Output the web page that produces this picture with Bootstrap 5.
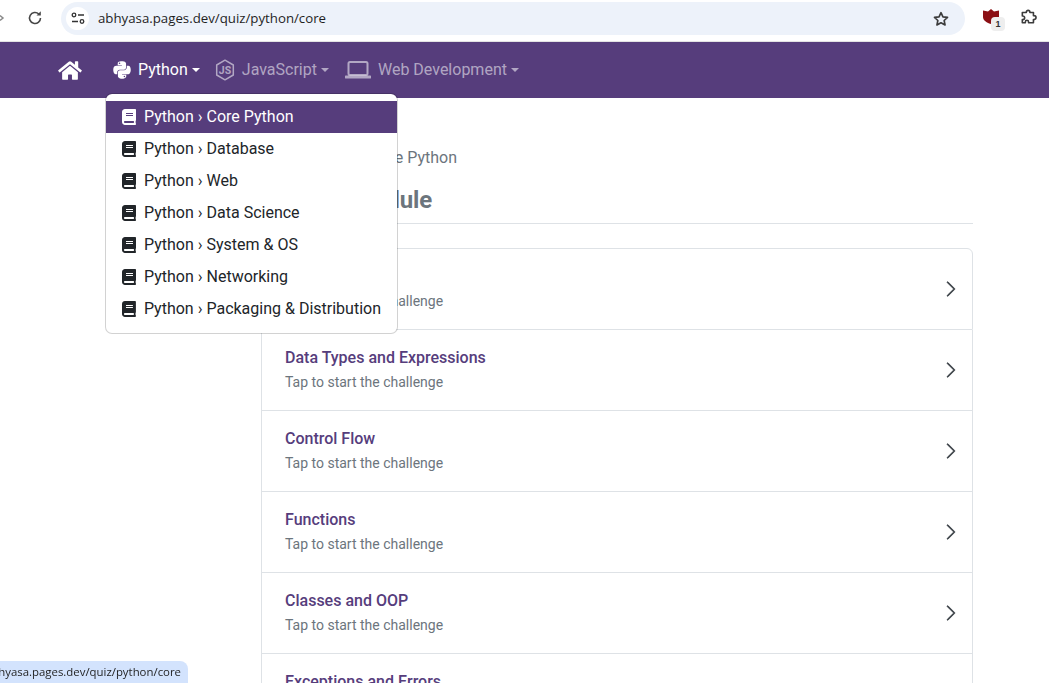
<!DOCTYPE html>
<html lang="en">
<head>
<meta charset="utf-8">
<title>Core Python</title>
<link href="https://cdn.jsdelivr.net/npm/bootstrap@5.3.0/dist/css/bootstrap.min.css" rel="stylesheet">
<style>
html,body{height:683px;overflow:hidden}
body{font-family:Roboto,"Liberation Sans",sans-serif;background:#fff;color:#212529}
.chrome-bar{height:42px;border-bottom:1px solid #e3e3e3;background:#fff}
.chrome-back{width:61px;height:35px;padding-right:18px}
.chrome-pill{margin-top:2px;width:904px;height:33px;background:#edf2fa;border-radius:17px;padding-left:5px;padding-right:15px}
.chrome-tune{width:23px;height:23px;border-radius:50%;background:#fff}
.chrome-url{font-family:"Open Sans","Noto Sans",sans-serif;font-size:13.25px;color:#1f1f1f;margin-left:9px}
.chrome-tools{height:32px;margin-top:2px;padding-left:18px;gap:21px}
.ext-wrap{position:relative;width:16px;height:22px;padding-top:7px}
.ext-badge{position:absolute;left:8px;top:15px;width:14px;height:14px;border-radius:4px;background:#eee;font:700 9px "Liberation Sans",sans-serif;color:#333;text-align:center;line-height:14px}
.ext-puzzle{margin-top:7px}
.topnav{background:#563d7c;height:56px;padding:0 0 0 58px}
.topnav .navbar-brand{margin:0 23px 0 0;padding:0;line-height:0}
.topnav .nav-link{font-size:16px;padding:8px;color:rgba(255,255,255,.55);display:flex;align-items:center}
.topnav .nav-item:first-child .nav-link{padding-right:7px}
.topnav .nav-link.active{color:#fff}
.topnav .nav-link svg{margin-right:7px}
.topnav .dropdown-toggle::after{margin-left:4px}
.py-menu{position:absolute;left:105px;top:93px;margin:0;width:293px;padding:7px 0 7.5px;border-radius:7px;z-index:10;display:block}
.py-menu .dropdown-item{height:32px;padding:4px 16px;display:flex;align-items:center;gap:8px;font-size:16px;color:#212529}
.py-menu .dropdown-item.active{background:#563d7c;color:#fff}
.quiz-main{margin-left:261px;width:712px;padding-top:48px}
.crumb-line{font-size:16px;color:#6c757d;line-height:24px;margin-bottom:16px;padding-left:2px}
.quiz-title{font-size:24px;font-weight:700;letter-spacing:-.15px;color:#6c757d;margin:0;line-height:29px;padding-bottom:8px;border-bottom:1px solid #dee2e6;margin-bottom:24px}
.quiz-list .list-group-item{height:81px;padding:0 12px 0 23px;display:flex;justify-content:space-between;align-items:center}
.quiz-list .list-group-item:first-child{height:82px}
.quiz-text{margin-bottom:2px}
.quiz-name{font-size:16px;font-weight:500;color:#563d7c;line-height:24px;margin-bottom:2px}
.quiz-sub{font-size:14px;color:#6c757d;line-height:21px}
.status-pop{position:fixed;left:0;bottom:0;width:188px;height:22px;background:#d3e3fd;border-top-right-radius:8px;overflow:hidden;justify-content:flex-end;padding-right:7px;font-family:"Open Sans","Noto Sans",sans-serif;font-size:11.4px;color:#1f1f1f;line-height:22px;white-space:nowrap;z-index:20}
</style>
</head>
<body>
<div class="chrome-bar d-flex align-items-start">
  <div class="chrome-back d-flex align-items-center justify-content-between">
    <svg width="6" height="12" viewBox="0 0 6 12"><path d="M0 3.5 3 6 0 8.500" fill="none" stroke="#8a8a8a" stroke-width="1.5"/></svg>
    <svg width="16" height="16" viewBox="0 0 16 16"><path d="M13.500 8a5.500 5.500 0 1 1-1.700-4" fill="none" stroke="#474747" stroke-width="1.600"/><path d="M13.800 1.200v4.300H9.500z" fill="#474747"/></svg>
  </div>
  <div class="chrome-pill d-flex align-items-center">
    <span class="chrome-tune d-flex align-items-center justify-content-center">
      <svg width="14" height="13" viewBox="0 0 14 13" fill="none" stroke="#333" stroke-width="1.300"><circle cx="3" cy="3" r="1.800"/><path d="M7 3h6M1 9.500h6"/><circle cx="11" cy="9.500" r="1.800"/></svg>
    </span>
    <span class="chrome-url">abhyasa.pages.dev/quiz/python/core</span>
    <svg class="ms-auto" width="18" height="18" viewBox="0 0 24 24"><path d="M12 3.500l2.600 5.600 6.100.7-4.500 4.200 1.200 6L12 17l-5.400 3 1.200-6-4.500-4.200 6.100-.7z" fill="none" stroke="#3c3c3c" stroke-width="2.200" stroke-linejoin="round"/></svg>
  </div>
  <div class="chrome-tools d-flex align-items-start">
    <div class="ext-wrap">
      <svg class="d-block" width="16" height="15" viewBox="0 0 16 15"><path d="M0 1.500 5 2.500 8 0l3 2.500 5-1V8c0 3-3 5.500-8 7-5-1.500-8-4-8-7z" fill="#8b0f14"/></svg>
      <span class="ext-badge">1</span>
    </div>
    <svg class="ext-puzzle" width="18" height="16" viewBox="0 0 18 18"><path d="M1.500 4H6V3.500a2 2 0 0 1 4 0V4h4v3.500h.7a2.200 2.200 0 0 1 0 4.400H14v3.600H8.500v-1a1.800 1.800 0 0 0-3.600 0v1H1.500v-3.600h.6a2 2 0 0 0 0-4h-.6z" fill="none" stroke="#3c3c3c" stroke-width="1.800" stroke-linejoin="round"/></svg>
  </div>
</div>

<nav class="navbar navbar-expand navbar-dark topnav">
  <a class="navbar-brand" href="#" aria-label="Home">
    <svg width="24" height="21" viewBox="0 0 576 512" fill="#fff"><path d="M280.37 148.26L96 300.11V464a16 16 0 0 0 16 16l112.06-.29a16 16 0 0 0 15.92-16V368a16 16 0 0 1 16-16h64a16 16 0 0 1 16 16v95.64a16 16 0 0 0 16 16.05L464 480a16 16 0 0 0 16-16V300L295.67 148.26a12.19 12.19 0 0 0-15.3 0zM571.6 251.47L488 182.56V44.05a12 12 0 0 0-12-12h-56a12 12 0 0 0-12 12v72.61L318.47 43a48 48 0 0 0-61 0L4.34 251.47a12 12 0 0 0-1.6 16.9l25.5 31A12 12 0 0 0 45.15 301l235.22-193.74a12.19 12.19 0 0 1 15.3 0L530.9 301a12 12 0 0 0 16.9-1.6l25.5-31a12 12 0 0 0-1.7-16.93z"/></svg>
  </a>
  <ul class="navbar-nav">
    <li class="nav-item dropdown">
      <a class="nav-link dropdown-toggle active" href="#">
        <svg width="18" height="20" viewBox="0 0 448 512" fill="#fff"><path d="M439.8 200.5c-7.7-30.9-22.3-54.2-53.4-54.2h-40.1v47.4c0 36.8-31.2 67.8-66.8 67.8H172.7c-29.2 0-53.4 25-53.4 54.3v101.8c0 29 25.2 46 53.4 54.3 33.8 9.9 66.3 11.7 106.8 0 26.9-7.8 53.4-23.500 53.4-54.3v-40.7H226.2v-13.6h160.2c31.1 0 42.6-21.7 53.4-54.2 11.2-33.500 10.7-65.7 0-108.6zM286.2 404c11.1 0 20.1 9.1 20.1 20.3 0 11.3-9 20.4-20.1 20.4-11 0-20.1-9.2-20.1-20.4.1-11.3 9.1-20.3 20.1-20.3zM167.8 248.1h106.8c29.7 0 53.4-24.5 53.4-54.3V91.9c0-29-24.4-50.7-53.4-55.6-35.8-5.9-74.7-5.6-106.8.1-45.2 8-53.4 24.7-53.4 55.6v40.7h106.9v13.6h-147c-31.1 0-58.3 18.7-66.8 54.2-9.8 40.7-10.2 66.1 0 108.6 7.6 31.6 25.7 54.2 56.8 54.2H101v-48.8c0-35.3 30.5-66.4 66.8-66.4zm-6.7-142.6c-11.1 0-20.1-9.1-20.1-20.3.1-11.3 9-20.4 20.1-20.4 11 0 20.1 9.2 20.1 20.4s-9 20.3-20.1 20.3z"/></svg>
        Python
      </a>
    </li>
    <li class="nav-item dropdown">
      <a class="nav-link dropdown-toggle" href="#">
        <svg width="20" height="22" viewBox="0 0 20 22"><path d="M10 1.200l8.300 4.800v10L10 20.800 1.700 16V6z" fill="none" stroke="currentColor" stroke-width="1.500" stroke-linejoin="round"/><text x="10" y="15" text-anchor="middle" font-family="Roboto,sans-serif" font-size="10.500" font-weight="700" fill="currentColor">JS</text></svg>
        JavaScript
      </a>
    </li>
    <li class="nav-item dropdown">
      <a class="nav-link dropdown-toggle" href="#">
        <svg width="26" height="20" viewBox="0 0 26 20" fill="none" stroke="currentColor"><rect x="3.500" y="2" width="19" height="13" rx="1.500" stroke-width="2"/><path d="M1 17h24" stroke-width="3" stroke-linecap="round"/></svg>
        Web Development
      </a>
    </li>
  </ul>
</nav>

<ul class="dropdown-menu py-menu list-unstyled">
  <li><a class="dropdown-item active" href="#"><svg width="14" height="16" viewBox="0 0 448 512" fill="currentColor"><use href="#book-i"/></svg>Python › Core Python</a></li>
  <li><a class="dropdown-item" href="#"><svg width="14" height="16" viewBox="0 0 448 512" fill="currentColor"><use href="#book-i"/></svg>Python › Database</a></li>
  <li><a class="dropdown-item" href="#"><svg width="14" height="16" viewBox="0 0 448 512" fill="currentColor"><use href="#book-i"/></svg>Python › Web</a></li>
  <li><a class="dropdown-item" href="#"><svg width="14" height="16" viewBox="0 0 448 512" fill="currentColor"><use href="#book-i"/></svg>Python › Data Science</a></li>
  <li><a class="dropdown-item" href="#"><svg width="14" height="16" viewBox="0 0 448 512" fill="currentColor"><use href="#book-i"/></svg>Python › System &amp; OS</a></li>
  <li><a class="dropdown-item" href="#"><svg width="14" height="16" viewBox="0 0 448 512" fill="currentColor"><use href="#book-i"/></svg>Python › Networking</a></li>
  <li><a class="dropdown-item" href="#"><svg width="14" height="16" viewBox="0 0 448 512" fill="currentColor"><use href="#book-i"/></svg>Python › Packaging &amp; Distribution</a></li>
</ul>

<svg width="0" height="0" class="position-absolute"><defs><path id="book-i" d="M448 360V24c0-13.3-10.7-24-24-24H96C43 0 0 43 0 96v320c0 53 43 96 96 96h328c13.3 0 24-10.7 24-24v-16c0-7.5-3.5-14.3-8.9-18.7-4.2-15.4-4.2-59.3 0-74.7 5.4-4.3 8.9-11.1 8.9-18.6zM128 134c0-3.3 2.7-6 6-6h212c3.3 0 6 2.7 6 6v20c0 3.3-2.7 6-6 6H134c-3.3 0-6-2.7-6-6v-20zm0 64c0-3.3 2.7-6 6-6h212c3.3 0 6 2.7 6 6v20c0 3.3-2.7 6-6 6H134c-3.3 0-6-2.7-6-6v-20zm253.4 250H96c-17.7 0-32-14.3-32-32 0-17.6 14.4-32 32-32h285.4c-1.9 17.1-1.900 46.9 0 64z"/><path id="chev-i" d="M4.646 1.646a.5.5 0 0 1 .708 0l6 6a.5.5 0 0 1 0 .708l-6 6a.5.5 0 0 1-.708-.708L10.293 8 4.646 2.354a.5.5 0 0 1 0-.708z"/></defs></svg>

<main class="quiz-main">
  <div class="crumb-line">Quiz › Python › Core Python</div>
  <h1 class="quiz-title">Select a Module</h1>
  <div class="list-group quiz-list">
    <a href="#" class="list-group-item list-group-item-action"><div class="quiz-text"><div class="quiz-name">Python Basics</div><div class="quiz-sub">Tap to start the challenge</div></div><svg width="18" height="18" viewBox="0 0 16 16" fill="#343a40" stroke="#343a40" stroke-width=".5"><use href="#chev-i"/></svg></a>
    <a href="#" class="list-group-item list-group-item-action"><div class="quiz-text"><div class="quiz-name">Data Types and Expressions</div><div class="quiz-sub">Tap to start the challenge</div></div><svg width="18" height="18" viewBox="0 0 16 16" fill="#343a40" stroke="#343a40" stroke-width=".5"><use href="#chev-i"/></svg></a>
    <a href="#" class="list-group-item list-group-item-action"><div class="quiz-text"><div class="quiz-name">Control Flow</div><div class="quiz-sub">Tap to start the challenge</div></div><svg width="18" height="18" viewBox="0 0 16 16" fill="#343a40" stroke="#343a40" stroke-width=".5"><use href="#chev-i"/></svg></a>
    <a href="#" class="list-group-item list-group-item-action"><div class="quiz-text"><div class="quiz-name">Functions</div><div class="quiz-sub">Tap to start the challenge</div></div><svg width="18" height="18" viewBox="0 0 16 16" fill="#343a40" stroke="#343a40" stroke-width=".5"><use href="#chev-i"/></svg></a>
    <a href="#" class="list-group-item list-group-item-action"><div class="quiz-text"><div class="quiz-name">Classes and OOP</div><div class="quiz-sub">Tap to start the challenge</div></div><svg width="18" height="18" viewBox="0 0 16 16" fill="#343a40" stroke="#343a40" stroke-width=".5"><use href="#chev-i"/></svg></a>
    <a href="#" class="list-group-item list-group-item-action"><div class="quiz-text"><div class="quiz-name">Exceptions and Errors</div><div class="quiz-sub">Tap to start the challenge</div></div><svg width="18" height="18" viewBox="0 0 16 16" fill="#343a40" stroke="#343a40" stroke-width=".5"><use href="#chev-i"/></svg></a>
  </div>
</main>

<div class="status-pop d-flex">abhyasa.pages.dev/quiz/python/core</div>
<script src="https://cdn.jsdelivr.net/npm/bootstrap@5.3.0/dist/js/bootstrap.bundle.min.js"></script>
</body>
</html>
